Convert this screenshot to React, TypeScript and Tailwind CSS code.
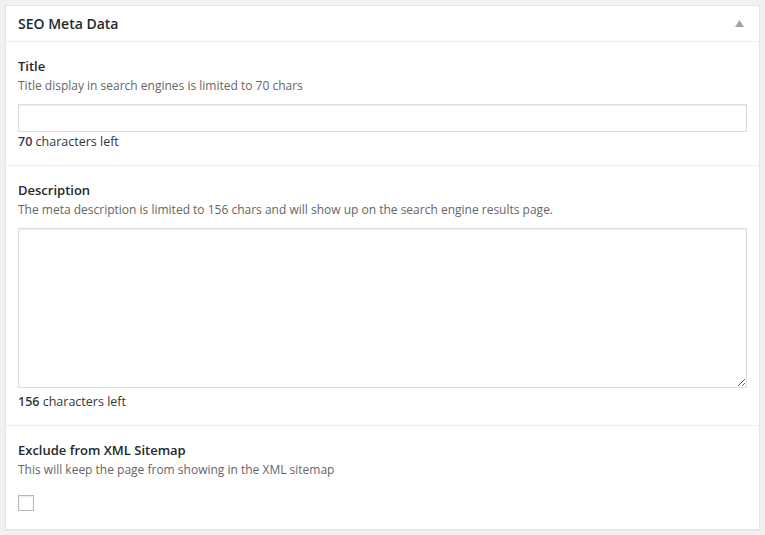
import React from "react";

export default function App() {
  return (
    <div
      className="w-[765px] h-[535px] bg-[#f1f1f1] pt-[5px] pl-[5px]"
      style={{ fontFamily: '"Open Sans", "Noto Sans", sans-serif' }}
    >
      <div className="w-[755px] h-[525px] bg-white border border-[#e5e5e5] shadow-[0_1px_1px_rgba(0,0,0,0.04)] flex flex-col">
        <div className="h-[36px] border-b border-[#eeeeee] flex items-center justify-between pl-[12px] pr-[14px]">
          <span className="text-[14px] font-semibold text-[#23282d] leading-[19px]">SEO Meta Data</span>
          <svg width="9" height="7" viewBox="0 0 9 7" className="mr-[1px]">
            <polygon points="4.5,0 9,7 0,7" fill="#a0a5aa" />
          </svg>
        </div>

        <div className="pt-[15px] pb-[14px] px-[12px] border-b border-[#eeeeee] text-[12px] leading-[19px]">
          <div className="text-[13px] font-semibold text-[#23282d]">Title</div>
          <div className="text-[#666666]">Title display in search engines is limited to 70 chars</div>
          <input
            type="text"
            className="block mt-[9px] w-[729px] h-[28px] border border-[#dddddd] shadow-[inset_0_1px_2px_rgba(0,0,0,0.07)] outline-none"
          />
          <div className="text-[12.5px] text-[#32373c]">
            <span className="font-semibold">70</span> characters left
          </div>
        </div>

        <div className="pt-[15px] pb-[14px] px-[12px] border-b border-[#eeeeee] text-[12px] leading-[19px]">
          <div className="text-[13px] font-semibold text-[#23282d]">Description</div>
          <div className="text-[#666666]">
            The meta description is limited to 156 chars and will show up on the search engine results page.
          </div>
          <textarea className="block mt-[9px] w-[729px] h-[160px] border border-[#dddddd] shadow-[inset_0_1px_2px_rgba(0,0,0,0.07)] outline-none" />
          <div className="mt-[4px] text-[12.5px] text-[#32373c]">
            <span className="font-semibold">156</span> characters left
          </div>
        </div>

        <div className="pt-[15px] px-[12px] text-[12px] leading-[19px]">
          <div className="text-[13px] font-semibold text-[#23282d]">Exclude from XML Sitemap</div>
          <div className="text-[#666666]">This will keep the page from showing in the XML sitemap</div>
          <div className="mt-[16px] w-[16px] h-[16px] border border-[#b4b9be] bg-white shadow-[inset_0_1px_2px_rgba(0,0,0,0.1)]" />
        </div>
      </div>
    </div>
  );
}
